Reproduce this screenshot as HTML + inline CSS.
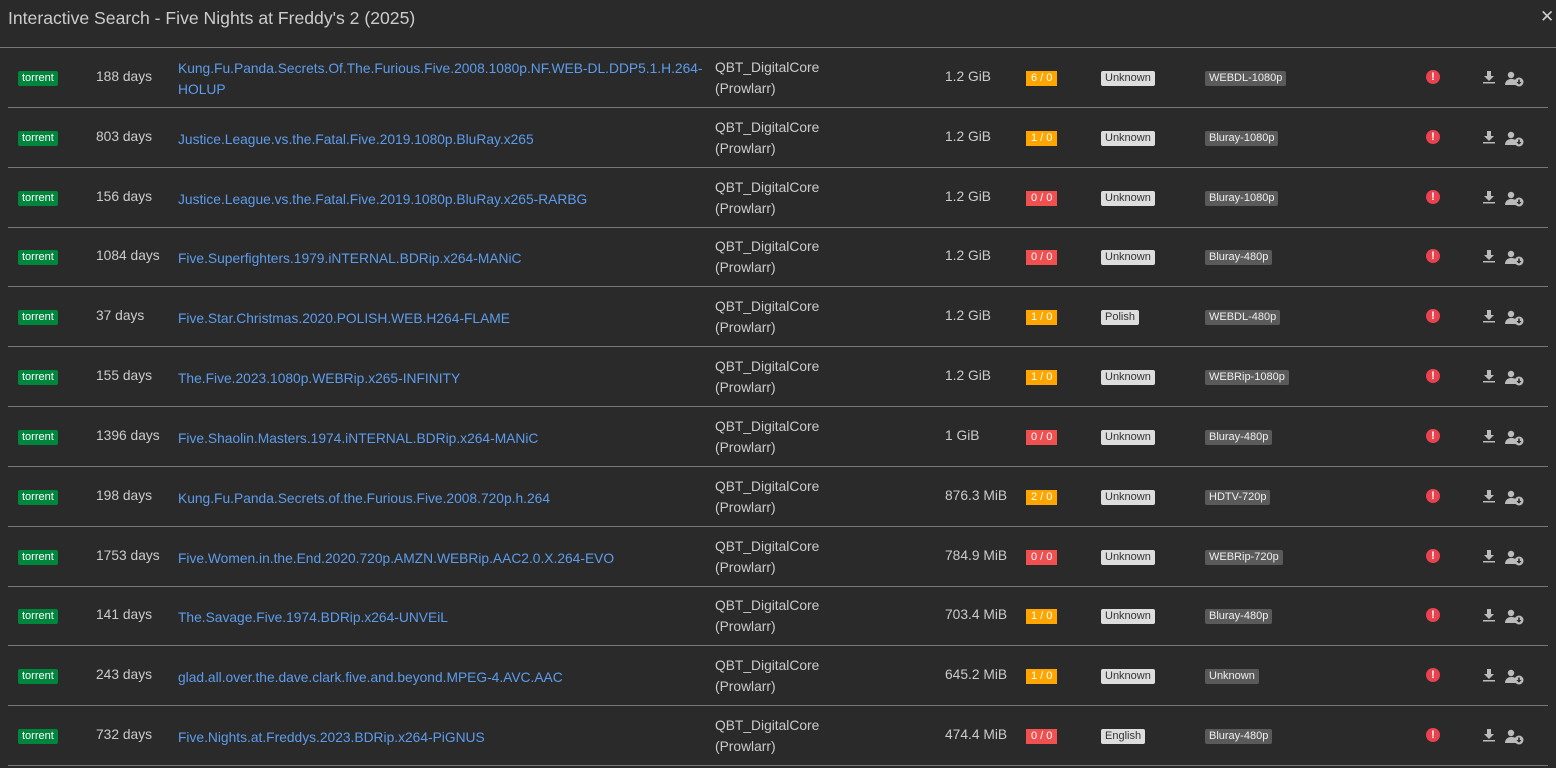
<!DOCTYPE html>
<html><head><meta charset="utf-8"><style>
body{margin:0;width:1556px;height:768px;background:#2a2a2a;font-family:"Liberation Sans",sans-serif;color:#ccc;overflow:hidden;position:relative}
.title{position:absolute;left:8px;top:8px;font-size:17.6px;color:#ccc}
.close{position:absolute;left:1540px;top:7px;font-size:17px;color:#ccc}
.hline{position:absolute;left:0;width:1556px;top:47px;height:1px;background:#777}
.row{position:absolute;left:8px;width:1540px;height:60px;border-bottom:1px solid #777;box-sizing:border-box;font-size:13.8px}
.row>*{position:absolute}
.proto{left:10px;top:23px;background:#00853d;color:#fff;font-size:11px;padding:1px 4px;line-height:13px;border-radius:2px}
.age{left:88px;top:21px}
.name{left:170px;top:10px;color:#5d9cec;width:528px;line-height:21px}
.name.one{top:21px}
.idx{left:707px;top:9px;line-height:21px}
.size{left:937px;top:21px}
.peer{left:1018px;top:23px;font-size:11px;color:#fff;padding:1px 5px;line-height:13px}
.lang{left:1093px;top:23px;font-size:11px;background:#ddd;color:#333;padding:1px 4px;line-height:13px;border-radius:2px}
.q{left:1197px;top:23px;font-size:11px;background:#5a5a5a;color:#eee;padding:1px 4px;line-height:13px;border-radius:2px}
.warn{left:1418px;top:22px;width:14px;height:14px;border-radius:50%;background:#e9424f;color:#fff;font-size:11px;font-weight:bold;text-align:center;line-height:14px}
.dl{left:1474px;top:22px}
.ad{left:1497px;top:23px}
</style></head><body>
<div class="title">Interactive Search - Five Nights at Freddy's 2 (2025)</div>
<div class="close">✕</div>
<div class="hline"></div>
<div id="rows"></div>
<script>
var d=[
["188 days","Kung.Fu.Panda.Secrets.Of.The.Furious.Five.2008.1080p.NF.WEB&#8209;DL.DDP5.1.H.264-HOLUP","1.2 GiB","6 / 0","o","Unknown","WEBDL-1080p"],
["803 days","Justice.League.vs.the.Fatal.Five.2019.1080p.BluRay.x265","1.2 GiB","1 / 0","o","Unknown","Bluray-1080p"],
["156 days","Justice.League.vs.the.Fatal.Five.2019.1080p.BluRay.x265-RARBG","1.2 GiB","0 / 0","r","Unknown","Bluray-1080p"],
["1084 days","Five.Superfighters.1979.iNTERNAL.BDRip.x264-MANiC","1.2 GiB","0 / 0","r","Unknown","Bluray-480p"],
["37 days","Five.Star.Christmas.2020.POLISH.WEB.H264-FLAME","1.2 GiB","1 / 0","o","Polish","WEBDL-480p"],
["155 days","The.Five.2023.1080p.WEBRip.x265-INFINITY","1.2 GiB","1 / 0","o","Unknown","WEBRip-1080p"],
["1396 days","Five.Shaolin.Masters.1974.iNTERNAL.BDRip.x264-MANiC","1 GiB","0 / 0","r","Unknown","Bluray-480p"],
["198 days","Kung.Fu.Panda.Secrets.of.the.Furious.Five.2008.720p.h.264","876.3 MiB","2 / 0","o","Unknown","HDTV-720p"],
["1753 days","Five.Women.in.the.End.2020.720p.AMZN.WEBRip.AAC2.0.X.264-EVO","784.9 MiB","0 / 0","r","Unknown","WEBRip-720p"],
["141 days","The.Savage.Five.1974.BDRip.x264-UNVEiL","703.4 MiB","1 / 0","o","Unknown","Bluray-480p"],
["243 days","glad.all.over.the.dave.clark.five.and.beyond.MPEG-4.AVC.AAC","645.2 MiB","1 / 0","o","Unknown","Unknown"],
["732 days","Five.Nights.at.Freddys.2023.BDRip.x264-PiGNUS","474.4 MiB","0 / 0","r","English","Bluray-480p"]];
var h="";
var dl='<svg width="14" height="14" viewBox="0 0 14 14"><path d="M5 1h4v5h3l-5 5-5-5h3z M1 12h12v1.5H1z" fill="#bbb"/></svg>';
var ad='<svg width="20" height="16" viewBox="0 0 20 16"><circle cx="6" cy="4" r="3.2" fill="#bbb"/><path d="M0 14c0-4 3-6 6-6s5 1 6 2v4z" fill="#bbb"/><circle cx="14" cy="11" r="4.5" fill="#bbb"/><path d="M13.2 8.5h1.6v2.5h1.7l-2.5 2.6-2.5-2.6h1.7z" fill="#2a2a2a"/></svg>';
d.forEach(function(r,i){
var top=48+i*59.83;
h+='<div class="row" style="top:'+top+'px"><span class="proto">torrent</span><span class="age">'+r[0]+'</span><span class="name'+(i?' one':'')+'">'+r[1]+'</span><span class="idx">QBT_DigitalCore<br>(Prowlarr)</span><span class="size">'+r[2]+'</span><span class="peer" style="background:'+(r[4]=="o"?"#ffa500":"#f05050")+'">'+r[3]+'</span><span class="lang">'+r[5]+'</span><span class="q">'+r[6]+'</span><span class="warn">!</span><span class="dl">'+dl+'</span><span class="ad">'+ad+'</span></div>';
});
document.getElementById("rows").innerHTML=h;
</script>
</body></html>
